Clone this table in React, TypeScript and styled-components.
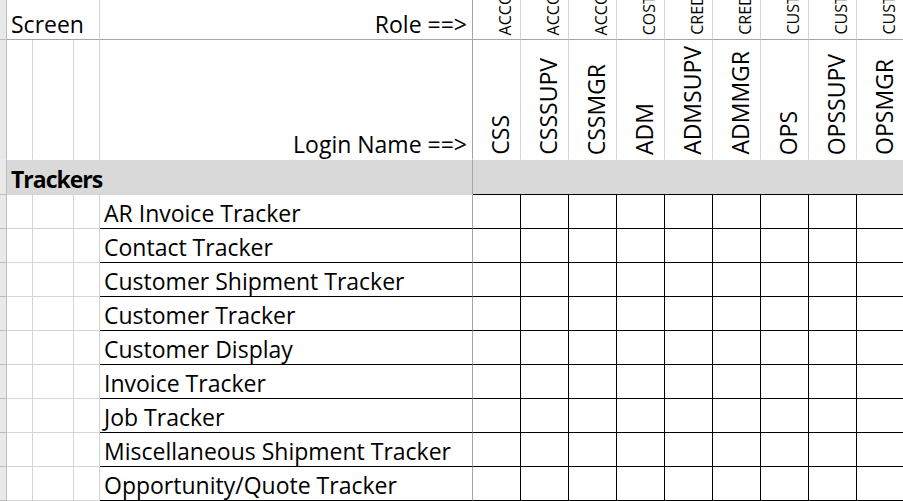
import React from 'react';
import styled, { createGlobalStyle } from 'styled-components';

const GlobalStyle = createGlobalStyle`
  html, body {
    margin: 0;
    padding: 0;
    background: #ffffff;
    overflow: hidden;
  }
  body {
    font-family: "Open Sans", "Noto Sans", sans-serif;
    color: #000000;
  }
`;

type Edge = 'grid' | 'freeze' | 'ink' | 'none';

const edgeColor: Record<Edge, string> = {
  grid: '#d4d4d4',
  freeze: '#a6a6a6',
  ink: '#000000',
  none: 'transparent',
};

const Sheet = styled.div`
  display: grid;
  grid-template-columns: 7px 26px 41px 26px 373px repeat(9, 48px);
  grid-template-rows: 40px 120px 35px repeat(9, 34px);
  width: 905px;
`;

const Cell = styled.div<{ $right?: Edge; $bottom?: Edge; $span?: number; $fill?: boolean; $alignRight?: boolean }>`
  box-sizing: border-box;
  min-width: 0;
  display: flex;
  align-items: flex-end;
  justify-content: ${(p) => (p.$alignRight ? 'flex-end' : 'flex-start')};
  grid-column: span ${(p) => p.$span || 1};
  border-right: 1px solid ${(p) => edgeColor[p.$right || 'grid']};
  border-bottom: 1px solid ${(p) => edgeColor[p.$bottom || 'grid']};
  background: ${(p) => (p.$fill ? '#d9d9d9' : '#ffffff')};
`;

const ClipCell = styled(Cell)<{ $small?: boolean }>`
  overflow: hidden;
  justify-content: flex-end;
  padding: ${(p) => (p.$small ? '0 7px 4px 0' : '0 8px 4px 0')};
`;

const RowHead = styled.div<{ $bottom?: boolean }>`
  box-sizing: border-box;
  background: #e9e9e9;
  border-right: 1px solid #bdbdbd;
  border-bottom: 1px solid ${(p) => (p.$bottom === false ? '#e9e9e9' : '#bdbdbd')};
`;

const Label = styled.span<{ $bold?: boolean; $padRight?: boolean }>`
  font-size: 23px;
  line-height: 23px;
  font-weight: ${(p) => (p.$bold ? 700 : 400)};
  letter-spacing: ${(p) => (p.$bold ? '-1px' : '0')};
  white-space: nowrap;
  padding: ${(p) => (p.$padRight ? '0 5px 3px 0' : '0 0 3px 4px')};
`;

const Rotated = styled.span<{ $small?: boolean }>`
  writing-mode: vertical-rl;
  transform: rotate(180deg);
  white-space: nowrap;
  flex-shrink: 0;
  font-size: ${(p) => (p.$small ? '16px' : '23px')};
  line-height: ${(p) => (p.$small ? '16px' : '23px')};
`;

const roles = [
  'ACCOUNTING',
  'ACCOUNTING',
  'ACCOUNTING',
  'COST CONTROL',
  'CREDIT',
  'CREDIT',
  'CUSTOMER SERVICE',
  'CUSTOMER SERVICE',
  'CUSTOMER SERVICE',
];

const logins = ['CSS', 'CSSSUPV', 'CSSMGR', 'ADM', 'ADMSUPV', 'ADMMGR', 'OPS', 'OPSSUPV', 'OPSMGR'];

const screens = [
  'AR Invoice Tracker',
  'Contact Tracker',
  'Customer Shipment Tracker',
  'Customer Tracker',
  'Customer Display',
  'Invoice Tracker',
  'Job Tracker',
  'Miscellaneous Shipment Tracker',
  'Opportunity/Quote Tracker',
];

function App() {
  return (
    <>
      <GlobalStyle />
      <Sheet>
        {/* row 1: roles */}
        <RowHead />
        <Cell $span={3} $bottom="freeze" style={{ overflow: 'visible' }}>
          <Label>Screen</Label>
        </Cell>
        <Cell $alignRight $right="freeze" $bottom="freeze">
          <Label $padRight>Role ==&gt;</Label>
        </Cell>
        {roles.map((r, i) => (
          <ClipCell key={'r' + i} $small $bottom="freeze">
            <Rotated $small>{r}</Rotated>
          </ClipCell>
        ))}

        {/* row 2: login names */}
        <RowHead $bottom={false} />
        <Cell $bottom="none" />
        <Cell $bottom="none" />
        <Cell $bottom="none" />
        <Cell $alignRight $right="freeze" $bottom="none">
          <Label $padRight>Login Name ==&gt;</Label>
        </Cell>
        {logins.map((l) => (
          <ClipCell key={l} $bottom="none">
            <Rotated>{l}</Rotated>
          </ClipCell>
        ))}

        {/* section row */}
        <RowHead />
        <Cell $span={4} $fill $right="freeze" $bottom="grid">
          <Label $bold>Trackers</Label>
        </Cell>
        <Cell $span={9} $fill $right="none" $bottom="ink" />

        {screens.map((s) => (
          <React.Fragment key={s}>
            <RowHead />
            <Cell />
            <Cell />
            <Cell />
            <Cell $right="freeze" $bottom="ink">
              <Label>{s}</Label>
            </Cell>
            {logins.map((l) => (
              <Cell key={s + l} $right="ink" $bottom="ink" />
            ))}
          </React.Fragment>
        ))}
      </Sheet>
    </>
  );
}

export default App;
